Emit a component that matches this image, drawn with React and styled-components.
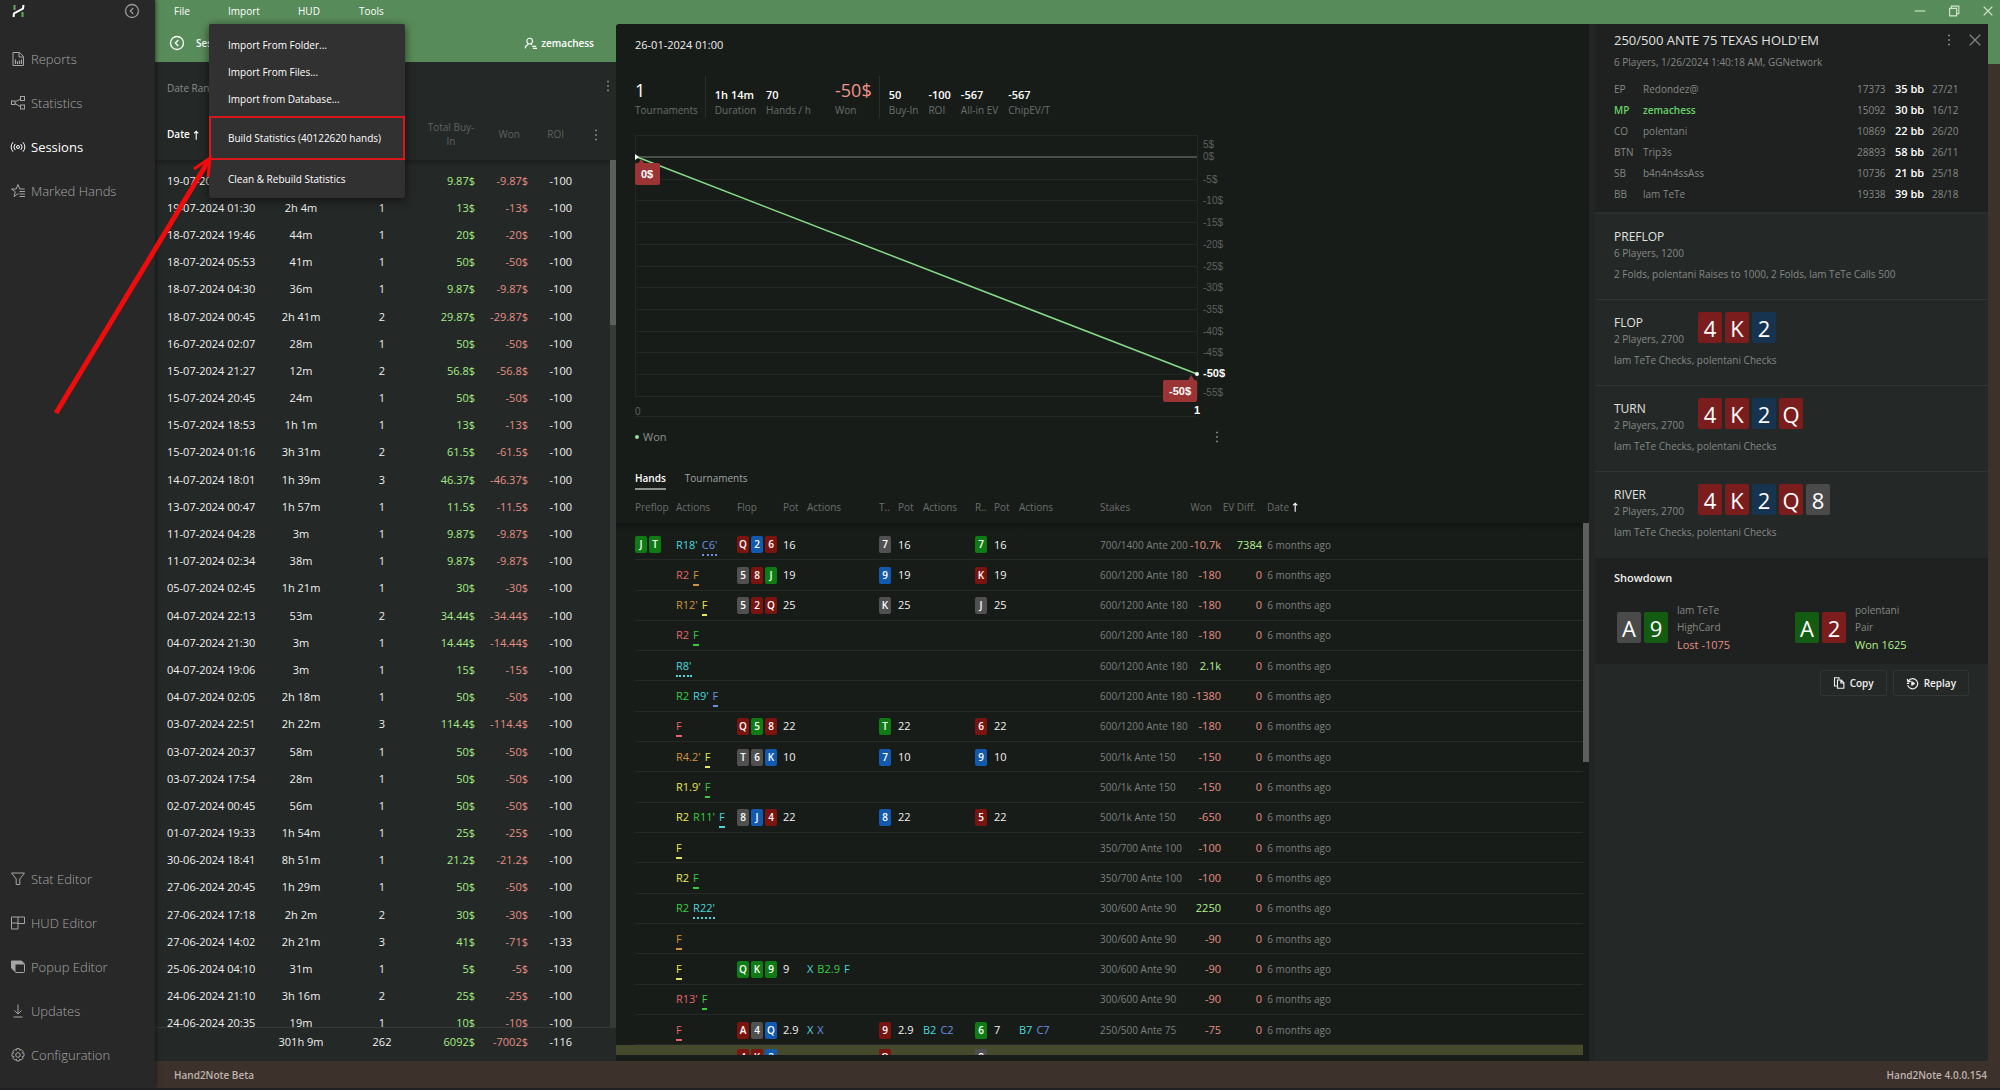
import styled, { createGlobalStyle, css } from 'styled-components'

const colors = {
    sidebar: '#282828',
    panel: '#242827',
    center: '#181c19',
    dark: '#1e211f',
    green: '#588b5a',
    brown: '#3d312b',
    text: '#f0f0f0',
    muted: '#7c807d',
    faint: '#5f6360',
    win: '#a6ee84',
    loss: '#e58f84',
}

const actionColors = {
    red: '#e0666c',
    orange: '#cf9440',
    yellow: '#e6e65a',
    green: '#38cc42',
    cyan: '#4ad8dc',
    blue: '#6a90e0',
}

const cardColors = {
    r: '#7b130f',
    g: '#0e7b13',
    b: '#1259b0',
    s: '#505050',
}

const bigCardColors = {
    r: '#7c1d1d',
    g: '#155c13',
    b: '#16344f',
    s: '#4a4a4a',
}

const sessions = [
    ['19-07-2024 02:10', '1h 2m', 1, '9.87$', '-9.87$', -100],
    ['19-07-2024 01:30', '2h 4m', 1, '13$', '-13$', -100],
    ['18-07-2024 19:46', '44m', 1, '20$', '-20$', -100],
    ['18-07-2024 05:53', '41m', 1, '50$', '-50$', -100],
    ['18-07-2024 04:30', '36m', 1, '9.87$', '-9.87$', -100],
    ['18-07-2024 00:45', '2h 41m', 2, '29.87$', '-29.87$', -100],
    ['16-07-2024 02:07', '28m', 1, '50$', '-50$', -100],
    ['15-07-2024 21:27', '12m', 2, '56.8$', '-56.8$', -100],
    ['15-07-2024 20:45', '24m', 1, '50$', '-50$', -100],
    ['15-07-2024 18:53', '1h 1m', 1, '13$', '-13$', -100],
    ['15-07-2024 01:16', '3h 31m', 2, '61.5$', '-61.5$', -100],
    ['14-07-2024 18:01', '1h 39m', 3, '46.37$', '-46.37$', -100],
    ['13-07-2024 00:47', '1h 57m', 1, '11.5$', '-11.5$', -100],
    ['11-07-2024 04:28', '3m', 1, '9.87$', '-9.87$', -100],
    ['11-07-2024 02:34', '38m', 1, '9.87$', '-9.87$', -100],
    ['05-07-2024 02:45', '1h 21m', 1, '30$', '-30$', -100],
    ['04-07-2024 22:13', '53m', 2, '34.44$', '-34.44$', -100],
    ['04-07-2024 21:30', '3m', 1, '14.44$', '-14.44$', -100],
    ['04-07-2024 19:06', '3m', 1, '15$', '-15$', -100],
    ['04-07-2024 02:05', '2h 18m', 1, '50$', '-50$', -100],
    ['03-07-2024 22:51', '2h 22m', 3, '114.4$', '-114.4$', -100],
    ['03-07-2024 20:37', '58m', 1, '50$', '-50$', -100],
    ['03-07-2024 17:54', '28m', 1, '50$', '-50$', -100],
    ['02-07-2024 00:45', '56m', 1, '50$', '-50$', -100],
    ['01-07-2024 19:33', '1h 54m', 1, '25$', '-25$', -100],
    ['30-06-2024 18:41', '8h 51m', 1, '21.2$', '-21.2$', -100],
    ['27-06-2024 20:45', '1h 29m', 1, '50$', '-50$', -100],
    ['27-06-2024 17:18', '2h 2m', 2, '30$', '-30$', -100],
    ['27-06-2024 14:02', '2h 21m', 3, '41$', '-71$', -133],
    ['25-06-2024 04:10', '31m', 1, '5$', '-5$', -100],
    ['24-06-2024 21:10', '3h 16m', 2, '25$', '-25$', -100],
    ['24-06-2024 20:35', '19m', 1, '10$', '-10$', -100],
]

// actions: [label, color, underline]
const hands = [
    {
        hole: 'Jg Tg',
        pre: [["R18'", 'cyan'], ["C6'", 'blue', 'dotted']],
        flop: 'Qr 2b 6r', turn: '7s', river: '7g', pots: [16, 16, 16],
        stakes: '700/1400 Ante 200', won: '-10.7k', ev: '7384',
    },
    {
        pre: [['R2', 'red'], ['F', 'orange', 'solid']],
        flop: '5s 8r Jg', turn: '9b', river: 'Kr', pots: [19, 19, 19],
        stakes: '600/1200 Ante 180', won: '-180',
    },
    {
        pre: [["R12'", 'orange'], ['F', 'yellow', 'solid']],
        flop: '5s 2r Qr', turn: 'Ks', river: 'Js', pots: [25, 25, 25],
        stakes: '600/1200 Ante 180', won: '-180',
    },
    {
        pre: [['R2', 'red'], ['F', 'green', 'solid']],
        stakes: '600/1200 Ante 180', won: '-180',
    },
    {
        pre: [["R8'", 'cyan', 'dotted']],
        stakes: '600/1200 Ante 180', won: '2.1k',
    },
    {
        pre: [['R2', 'green'], ["R9'", 'cyan'], ['F', 'blue', 'solid']],
        stakes: '600/1200 Ante 180', won: '-1380',
    },
    {
        pre: [['F', 'red', 'solid']],
        flop: 'Qr 5g 8r', turn: 'Tg', river: '6r', pots: [22, 22, 22],
        stakes: '600/1200 Ante 180', won: '-180',
    },
    {
        pre: [["R4.2'", 'orange'], ['F', 'yellow', 'solid']],
        flop: 'Ts 6s Kb', turn: '7b', river: '9b', pots: [10, 10, 10],
        stakes: '500/1k Ante 150', won: '-150',
    },
    {
        pre: [["R1.9'", 'yellow'], ['F', 'green', 'solid']],
        stakes: '500/1k Ante 150', won: '-150',
    },
    {
        pre: [['R2', 'yellow'], ["R11'", 'green'], ['F', 'cyan', 'solid']],
        flop: '8s Jb 4r', turn: '8b', river: '5r', pots: [22, 22, 22],
        stakes: '500/1k Ante 150', won: '-650',
    },
    { pre: [['F', 'yellow', 'solid']], stakes: '350/700 Ante 100', won: '-100' },
    {
        pre: [['R2', 'yellow'], ['F', 'green', 'solid']],
        stakes: '350/700 Ante 100', won: '-100',
    },
    {
        pre: [['R2', 'green'], ["R22'", 'cyan', 'dotted']],
        stakes: '300/600 Ante 90', won: '2250',
    },
    { pre: [['F', 'orange', 'solid']], stakes: '300/600 Ante 90', won: '-90' },
    {
        pre: [['F', 'yellow', 'solid']],
        flop: 'Qg Kg 9g', pots: [9],
        flopActions: [['X', 'cyan'], ['B2.9', 'green'], ['F', 'cyan']],
        stakes: '300/600 Ante 90', won: '-90',
    },
    {
        pre: [["R13'", 'red'], ['F', 'green', 'solid']],
        stakes: '300/600 Ante 90', won: '-90',
    },
    {
        pre: [['F', 'red', 'solid']],
        flop: 'Ar 4s Qb', turn: '9r', river: '6g', pots: ['2.9', '2.9', 7],
        flopActions: [['X', 'cyan'], ['X', 'blue']],
        turnActions: [['B2', 'cyan'], ['C2', 'blue']],
        riverActions: [['B7', 'cyan'], ['C7', 'blue']],
        stakes: '250/500 Ante 75', won: '-75',
    },
    { selected: true, flop: '4r Kr 2b', turn: 'Qr', river: '8s' },
]

const players = [
    ['EP', 'Redondez@', 17373, '35 bb', '27/21'],
    ['MP', 'zemachess', 15092, '30 bb', '16/12'],
    ['CO', 'polentani', 10869, '22 bb', '26/20'],
    ['BTN', 'Trip3s', 28893, '58 bb', '26/11'],
    ['SB', 'b4n4n4ssAss', 10736, '21 bb', '25/18'],
    ['BB', 'lam TeTe', 19338, '39 bb', '28/18'],
]

const streets = [
    {
        name: 'PREFLOP',
        info: '6 Players, 1200',
        text: '2 Folds, polentani Raises to 1000, 2 Folds, lam TeTe Calls 500',
    },
    { name: 'FLOP', cards: '4r Kr 2b' },
    { name: 'TURN', cards: '4r Kr 2b Qr' },
    { name: 'RIVER', cards: '4r Kr 2b Qr 8s' },
]

const GlobalStyle = createGlobalStyle`
    * {
        box-sizing: border-box;
    }
    body {
        margin: 0;
        background: #171717;
        color: ${colors.text};
        font: 11px/16px 'Open Sans', 'Noto Sans', sans-serif;
    }
    button {
        font: inherit;
        color: inherit;
        background: none;
        border: 0;
        padding: 0;
        cursor: pointer;
    }
    table {
        border-collapse: collapse;
        table-layout: fixed;
    }
    td, th {
        padding: 0;
        font-weight: inherit;
        white-space: nowrap;
    }
    h2, h3, p {
        margin: 0;
        font-weight: 400;
    }
`

const Shell = styled.div`
    display: flex;
    height: 100vh;
    overflow: hidden;
    position: relative;
    border-bottom: 2px solid #202022;
`

/* sidebar */
const Sidebar = styled.nav`
    display: flex;
    flex-direction: column;
    flex: 0 0 155px;
    background: ${colors.sidebar};
    padding-bottom: 11px;
    box-shadow: 1px 0 4px rgba(0, 0, 0, 0.5);
    z-index: 1;
`
const Brand = styled.div`
    display: flex;
    align-items: center;
    justify-content: space-between;
    height: 22px;
    padding: 0 15px 0 12px;
    margin-bottom: 15px;
    color: #9a9a9a;

    button,
    svg {
        display: block;
    }
`
const NavLink = styled.a`
    display: flex;
    align-items: center;
    gap: 5px;
    height: 44px;
    padding-left: 10px;
    font-size: 13px;
    font-weight: ${(props) => (props.$active ? 500 : 300)};
    color: ${(props) => (props.$active ? '#fff' : '#a6a6a6')};
    text-decoration: none;
`
const Spacer = styled.div`
    flex: 1;
`

/* window */
const Main = styled.div`
    flex: 1;
    min-width: 0;
    display: flex;
    flex-direction: column;
`
const MenuBar = styled.header`
    display: flex;
    align-items: center;
    height: 24px;
    padding: 0 5px 2px 19px;
    background: ${colors.green};
    color: #fff;
    font-size: 10px;
    font-weight: 500;
`
const MenuItem = styled.div`
    position: relative;
    width: ${(props) => props.$width}px;
`
const Dropdown = styled.div`
    position: absolute;
    top: 21px;
    left: -19px;
    width: 196px;
    padding: 7px 0 6px;
    background: #313131;
    border-radius: 2px;
    box-shadow: 0 2px 10px rgba(0, 0, 0, 0.6);
    z-index: 10;
`
const DropdownItem = styled.button`
    display: block;
    width: 100%;
    height: ${(props) => (props.$boxed ? 44 : 27)}px;
    margin: ${(props) => (props.$boxed ? '4px 0 5px' : 0)};
    padding-left: ${(props) => (props.$boxed ? 17 : 19)}px;
    border: ${(props) => (props.$boxed ? '2px solid #d8191b' : 0)};
    text-align: left;
    white-space: nowrap;
`
const WindowButtons = styled.div`
    display: flex;
    gap: 20px;
    margin-left: auto;
    color: #d3e6d2;

    svg {
        display: block;
    }
`
const Body = styled.div`
    flex: 1;
    min-height: 0;
    display: flex;
    padding-right: 12px;
    background: linear-gradient(${colors.green} 40px, ${colors.brown} 40px);
`
const StatusBar = styled.footer`
    display: flex;
    align-items: center;
    justify-content: space-between;
    height: 27px;
    padding: 0 13px 0 19px;
    background: ${colors.brown};
    color: #bdb4ae;
    font-size: 10px;
    font-weight: 600;
`

/* sessions list */
const SessionsPanel = styled.section`
    display: flex;
    flex-direction: column;
    flex: 0 0 461px;
    background: ${colors.panel};
`
const SessionsBar = styled.div`
    display: flex;
    align-items: center;
    gap: 11px;
    height: 38px;
    padding: 0 22px 0 14px;
    background: ${colors.green};
    color: #fff;
    font-size: 10px;
    font-weight: 600;

    svg {
        display: block;
    }
`
const Account = styled.button`
    display: flex;
    align-items: center;
    gap: 4px;
    margin-left: auto;
`
const FilterBar = styled.div`
    display: flex;
    align-items: center;
    justify-content: space-between;
    height: 46px;
    padding: 6px 2px 0 12px;
    color: #8a8d8a;
    font-size: 10px;
`
const Scroller = styled.div`
    flex: 1;
    min-height: 0;
    display: flex;
    overflow: hidden;
`
const ScrollTrack = styled.div`
    flex: 0 0 6px;
    margin-top: ${(props) => props.$top}px;
    background: ${(props) => props.$track};

    &::before {
        content: '';
        display: block;
        height: ${(props) => props.$thumb};
        background: #5d5f5e;
    }
`
const SessionTable = styled.table`
    width: 455px;
    height: ${(props) => (props.$stretch ? 'calc(100% + 10px)' : '28px')};
    font-size: 11px;
    font-weight: 500;

    thead th {
        height: 52px;
        color: ${colors.faint};
        font-size: 10px;
        font-weight: 400;
        line-height: 14px;
    }
`
const Shade = styled.tr`
    height: 7px;
    background: linear-gradient(#1c1f1e, ${colors.panel});
`
const Cell = styled.td`
    text-align: ${(props) => props.$align || 'left'};
    color: ${(props) => props.$color || 'inherit'};
    font-size: ${(props) => (props.$small ? 10 : 11)}px;
    font-weight: ${(props) => (props.$small ? 400 : 'inherit')};
`
const Th = styled.th`
    && {
        padding: 0 ${(props) => props.$right || 0}px 0 ${(props) => props.$left || 0}px;
        text-align: ${(props) => props.$align || 'left'};
        color: ${(props) => props.$color};
        font-weight: ${(props) => (props.$color ? 600 : 400)};
        white-space: ${(props) => (props.$wrap ? 'normal' : 'nowrap')};
    }
    svg {
        vertical-align: middle;
    }
`
const TotalBar = styled.div`
    flex: 0 0 34px;
    border-top: 1px solid #353938;
`

/* center */
const DetailPanel = styled.section`
    flex: 1;
    min-width: 0;
    display: flex;
    flex-direction: column;
    background: ${colors.center};
    border-radius: 3px 0 0 0;
    padding-bottom: 6px;
`
const DetailTitle = styled.h2`
    padding: 13px 19px 0;
    font-size: 11px;
    line-height: 16px;
    font-weight: 500;
`
const StatRow = styled.div`
    display: flex;
    align-items: flex-end;
    height: 65px;
    padding-left: 19px;
`
const StatGroup = styled.div`
    display: flex;
    align-items: flex-end;
    gap: 10px;
    height: 42px;
    padding: 0 7px 0 ${(props) => (props.$first ? 0 : 9)}px;
    border-right: ${(props) => (props.$last ? 0 : '1px solid #2b2f2c')};
`
const Stat = styled.div`
    margin-left: ${(props) => (props.$apart ? 14 : 0)}px;
    color: #6a6e6b;
    font-size: 10px;
    line-height: 16px;
    white-space: nowrap;

    strong {
        display: block;
        font-size: ${(props) => (props.$big ? 18 : 11)}px;
        font-weight: ${(props) => (props.$big ? 400 : 600)};
        line-height: ${(props) => (props.$big ? 24 : 14)}px;
        color: ${(props) => props.$color || '#fff'};
    }
`
const ChartBox = styled.div`
    padding: 17px 19px 0;

    svg {
        display: block;
        font-family: 'Liberation Sans', Arial, sans-serif;
    }
`
const Legend = styled.div`
    display: flex;
    align-items: center;
    width: 607px;
    height: 20px;
    margin-top: 6px;
    padding: 0 0 0 19px;
    color: #8e918f;

    &::before {
        content: '';
        width: 4px;
        height: 4px;
        margin-right: 4px;
        border-radius: 50%;
        background: #8fe08f;
    }
    button {
        margin-left: auto;
    }
    svg {
        display: block;
    }
`
const Tabs = styled.div`
    display: flex;
    gap: 19px;
    padding: 23px 19px 0;
`
const Tab = styled.button`
    height: 20px;
    padding-bottom: 2px;
    border-bottom: 2px solid ${(props) => (props.$active ? '#8e918f' : 'transparent')};
    font-size: 10px;
    font-weight: ${(props) => (props.$active ? 600 : 400)};
    color: ${(props) => (props.$active ? '#fff' : '#a0a3a1')};
`
const HandTable = styled.table`
    width: 100%;
    height: calc(100% + 15px);
    font-weight: 500;

    th {
        height: 33px;
        color: #6a6e6b;
        font-size: 10px;
        font-weight: 400;
        text-align: left;
    }
    tbody td {
        border-bottom: 1px solid #262a27;
    }
    tbody td:first-child {
        border-bottom: 0;
    }
`
const HandShade = styled.tr`
    height: 7px;
    background: linear-gradient(#101311, ${colors.center});

    && td {
        border: 0;
    }
`
const HandRow = styled.tr`
    background: ${(props) => (props.$selected ? '#454a2c' : 'none')};
`
const Cards = styled.span`
    display: inline-flex;
    gap: 2px;
    vertical-align: middle;
`
const Card = styled.span`
    width: 12px;
    height: 17px;
    border-radius: 2px;
    background: ${(props) => cardColors[props.$suit]};
    color: #fff;
    font-size: 10px;
    font-weight: 600;
    line-height: 17px;
    text-align: center;
`
const Actions = styled.span`
    display: inline-flex;
    gap: 4px;
    vertical-align: middle;
`
const Action = styled.span`
    display: inline-block;
    height: 19px;
    margin-top: 3px;
    line-height: 16px;
    color: ${(props) => actionColors[props.$color]};
    ${(props) =>
        props.$line &&
        css`
            border-bottom: 2px ${props.$line} ${actionColors[props.$color]};
        `}
`

/* hand history */
const HandPanel = styled.aside`
    display: flex;
    flex-direction: column;
    flex: 0 0 399px;
    background: ${colors.panel};
    border-left: 6px solid #222524;
    border-radius: 0 3px 0 0;
    font-size: 10px;
    color: #858886;
`
const HandHeader = styled.div`
    height: 190px;
    padding: 5px 0 0 19px;
    background: ${colors.dark};
    border-bottom: 2px solid #2b2f2e;
`
const TitleRow = styled.div`
    display: flex;
    align-items: center;
    gap: 13px;
    padding-right: 6px;

    h2 {
        flex: 1;
        font-size: 13px;
        line-height: 22px;
        font-weight: 400;
        color: #e0e2e0;
    }
    svg {
        display: block;
    }
`
const HandInfo = styled.p`
    padding-top: 3px;
`
const PlayerTable = styled.table`
    width: 100%;
    margin-top: 8px;

    td {
        height: 21px;
    }
    td:nth-child(4) {
        color: #fff;
        font-size: 11px;
        font-weight: 600;
    }
`
const PlayerRow = styled.tr`
    td:nth-child(-n + 2) {
        ${(props) => props.$hero && 'color: #66d467; font-weight: 600;'}
    }
`
const Street = styled.section`
    height: 86px;
    padding: 12px 0 0 19px;
    border-bottom: 1px solid ${(props) => (props.$last ? 'transparent' : '#313534')};
`
const StreetHead = styled.div`
    display: flex;
    height: 36px;

    h3 {
        font-size: 12px;
        line-height: 17px;
        color: #e0e2e0;
    }
    p {
        line-height: 16px;
    }
`
const StreetName = styled.div`
    flex: 0 0 84px;
    padding-top: 2px;
    white-space: nowrap;
`
const StreetText = styled.p`
    margin-top: 4px;
    line-height: 16px;
`
const BigCards = styled.div`
    display: flex;
    gap: 3px;
`
const BigCard = styled.span`
    width: 24px;
    height: 31px;
    border-radius: 2px;
    background: ${(props) => bigCardColors[props.$suit]};
    color: #fff;
    font-size: 22px;
    line-height: 33px;
    text-align: center;
`
const Showdown = styled.section`
    height: 106px;
    padding: 12px 0 0 19px;
    background: ${colors.dark};

    h3 {
        font-size: 11px;
        line-height: 16px;
        font-weight: 600;
        color: #f0f0f0;
    }
`
const Results = styled.div`
    display: grid;
    grid-template-columns: 178px 1fr;
    margin-top: 16px;
    padding-left: 3px;
`
const Result = styled.div`
    display: flex;
    align-items: center;
    gap: 9px;
    line-height: 17px;

    strong {
        display: block;
        font-size: 11px;
        font-weight: 500;
        color: ${(props) => (props.$won ? '#b3f08f' : colors.loss)};
    }
`
const ButtonRow = styled.div`
    display: flex;
    justify-content: flex-end;
    gap: 6px;
    padding: 6px 19px 0 0;
`
const OutlineButton = styled.button`
    display: flex;
    align-items: center;
    justify-content: center;
    gap: 5px;
    height: 26px;
    padding: 0 12px;
    border: 1px solid #313534;
    border-radius: 2px;
    color: #f0f0f0;
    font-size: 10px;
    font-weight: 600;
`

const Arrow = styled.svg`
    position: absolute;
    left: 0;
    top: 0;
    pointer-events: none;
    z-index: 20;
`

const Svg = ({ size = 16, children, ...rest }) => (
    <svg
        width={size}
        height={size}
        viewBox="0 0 16 16"
        fill="none"
        stroke="currentColor"
        aria-hidden="true"
        {...rest}
    >
        {children}
    </svg>
)

const BackIcon = () => (
    <Svg>
        <circle cx="8" cy="8" r="6.5" strokeWidth="1.3" />
        <path d="M9.3 5L6.3 8l3 3" strokeWidth="1.3" />
    </Svg>
)

const DotsIcon = () => (
    <Svg size={12} fill="#a4a7a5" stroke="none">
        <rect x="7" y="1" width="2" height="2" />
        <rect x="7" y="7" width="2" height="2" />
        <rect x="7" y="13" width="2" height="2" />
    </Svg>
)

const SortIcon = () => (
    <Svg size={11} stroke="#fff">
        <path d="M9 14V2M6 5l3-3 3 3" strokeWidth="1.6" />
    </Svg>
)

const icons = {
    Reports: (
        <>
            <path d="M3 1.5h6.5l4 4v9H3z" />
            <path d="M9 1.5V6h4.5" />
            <path d="M5.5 13V8.5M7.5 13v-2.5M9.5 13V9.5M11.5 13V8.5" strokeWidth="1.2" />
        </>
    ),
    Statistics: (
        <>
            <rect x="1.5" y="6" width="3.5" height="3.5" />
            <rect x="10.5" y="1.5" width="4" height="4" />
            <rect x="10.5" y="10" width="4" height="4" />
            <path d="M5 7l5.5-3M5 8.5l5.5 3.2" />
        </>
    ),
    Sessions: (
        <>
            <circle cx="8" cy="8" r="1.5" />
            <path d="M5.2 5a4.5 4.5 0 0 0 0 6M10.8 5a4.5 4.5 0 0 1 0 6M3 3.3a7.5 7.5 0 0 0 0 9.4M13 3.3a7.5 7.5 0 0 1 0 9.4" />
        </>
    ),
    'Marked Hands': (
        <path d="M8.5 10.5L4 13.5l1.3-4.7L1.5 6h4.7L8 1.5 9.7 6h5M9.5 8.5h5.5M9.5 11h5.5M9.5 13.5h5.5" />
    ),
    'Stat Editor': <path d="M1.5 2h13l-4.7 6v5.5H6.2V8z" />,
    'HUD Editor': <path d="M1.5 2h13v6.5H8V14H1.5zM8 2v6.5M1.5 8H8" />,
    'Popup Editor': (
        <>
            <path d="M4.5 12L1.5 9V2h10l3 3" fill="currentColor" />
            <rect x="5" y="5" width="9.5" height="8.5" rx="1" fill={colors.sidebar} />
        </>
    ),
    Updates: <path d="M8 1.5v9M4.5 7.5L8 11l3.5-3.5M3.5 14h9" />,
    Configuration: (
        <>
            <circle cx="8" cy="8" r="2.3" />
            <path d="M6.8 1.5h2.4l.4 1.8 1.6-.9 1.9 1.9-1 1.5 1.9.5v2.9l-1.9.5 1 1.5-1.9 1.9-1.6-.9-.4 1.8H6.8l-.4-1.8-1.6.9-1.9-1.9 1-1.5L2 9.2V6.3l1.9-.5-1-1.5 1.9-1.9 1.6.9z" />
        </>
    ),
}

const NavItem = ({ name, active }) => (
    <NavLink href={`#${name}`} $active={active}>
        <Svg>{icons[name]}</Svg>
        {name}
    </NavLink>
)

const parseCards = (str) => str.split(' ').map((c) => [c[0], c[1]])

const CardList = ({ cards }) =>
    cards ? (
        <Cards>
            {parseCards(cards).map(([rank, suit]) => (
                <Card key={rank + suit} $suit={suit}>
                    {rank}
                </Card>
            ))}
        </Cards>
    ) : null

const BigCardList = ({ cards }) => (
    <BigCards>
        {parseCards(cards).map(([rank, suit]) => (
            <BigCard key={rank + suit} $suit={suit}>
                {rank}
            </BigCard>
        ))}
    </BigCards>
)

const ActionList = ({ actions = [] }) => (
    <Actions>
        {actions.map(([label, color, line], i) => (
            <Action key={i} $color={color} $line={line}>
                {label}
            </Action>
        ))}
    </Actions>
)

const Cols = ({ widths }) => (
    <colgroup>
        {widths.map((width, i) => (
            <col key={i} width={width} />
        ))}
        <col />
    </colgroup>
)

const sessionCols = [12, 90, 88, 74, 56, 53, 44]
const handCols = [19, 41, 61, 46, 24, 72, 19, 25, 52, 19, 25, 81, 87, 34, 41]

const SessionCells = ({ row }) => (
    <tr>
        <td />
        <Cell>{row[0]}</Cell>
        <Cell $align="center">{row[1]}</Cell>
        <Cell $align="center">{row[2]}</Cell>
        <Cell $align="right" $color={colors.win}>{row[3]}</Cell>
        <Cell $align="right" $color={colors.loss}>{row[4]}</Cell>
        <Cell $align="right">{row[5]}</Cell>
        <td />
    </tr>
)

function Sessions() {
    return (
        <SessionsPanel>
            <SessionsBar>
                <button aria-label="Back">
                    <BackIcon />
                </button>
                <span>Sessions</span>
                <Account>
                    <Svg size={13}>
                        <circle cx="7" cy="5" r="3.5" strokeWidth="1.3" />
                        <path d="M1.5 14c.3-3 2-4.5 4-5.5M8.5 8.5l1.5 1" strokeWidth="1.3" />
                        <path d="M10 11.5h5M11 14h5" strokeWidth="1.6" />
                    </Svg>
                    zemachess
                </Account>
            </SessionsBar>
            <FilterBar>
                <span>Date Range</span>
                <button aria-label="Filter options">
                    <DotsIcon />
                </button>
            </FilterBar>
            <Scroller>
                <SessionTable $stretch>
                    <Cols widths={sessionCols} />
                    <thead>
                        <tr>
                            <th />
                            <Th $color="#fff">
                                Date
                                <SortIcon />
                            </Th>
                            <Th $align="center">Duration</Th>
                            <Th $align="center">Count</Th>
                            <Th $align="center" $left={8} $wrap>Total Buy-In</Th>
                            <Th $align="right" $right={8}>Won</Th>
                            <Th $align="right" $right={8}>ROI</Th>
                            <Th $align="right" $right={8}>
                                <button aria-label="Columns">
                                    <DotsIcon />
                                </button>
                            </Th>
                        </tr>
                    </thead>
                    <tbody>
                        <Shade>
                            <td colSpan="8" />
                        </Shade>
                        {sessions.map((row) => (
                            <SessionCells key={row[0]} row={row} />
                        ))}
                    </tbody>
                </SessionTable>
                <ScrollTrack $top={52} $thumb="19%" $track="#363a39" />
            </Scroller>
            <TotalBar>
                <SessionTable>
                    <Cols widths={sessionCols} />
                    <tbody>
                        <SessionCells row={['', '301h 9m', 262, '6092$', '-7002$', -116]} />
                    </tbody>
                </SessionTable>
            </TotalBar>
        </SessionsPanel>
    )
}

function Chart() {
    const step = 21.7
    const zero = 22
    const end = zero + step * 10
    return (
        <ChartBox>
            <svg width="604" height="286" viewBox="0 0 604 286" fontSize="10">
                <g stroke="#242825">
                    {Array.from({ length: 11 }, (_, i) => (
                        <path key={i} d={`M0 ${Math.round(zero + step * (i + 1)) + 0.5}H562`} />
                    ))}
                    <path d="M0 .5H562M562.5 0V262M0 281.5H562M.5 0V262" />
                </g>
                <path d={`M0 ${zero}H562`} stroke="#4a4e4b" strokeWidth="2" />
                <path d={`M2 ${zero}L562 ${end}`} stroke="#86dc8a" strokeWidth="1.5" />
                <path d={`M0 ${zero - 3}L4 ${zero}L0 ${zero + 3}z`} fill="#fff" />
                <circle cx="562" cy={end} r="2" fill="#fff" />
                <g fill="#9c3436">
                    <path d="M3 29L6 24l4 5z" />
                    <rect x="0" y="28" width="25" height="22" rx="2" />
                    <path d="M553 246l3-6 4 6z" />
                    <rect x="528" y="245" width="34" height="22" rx="2" />
                </g>
                <g fill="#fff" fontWeight="700" fontSize="11">
                    <text x="12" y="43" textAnchor="middle">0$</text>
                    <text x="545" y="260" textAnchor="middle">-50$</text>
                    <text x="568" y={end + 3}>-50$</text>
                    <text x="562" y="279" textAnchor="middle">1</text>
                </g>
                <g fill="#5c615e">
                    <text x="568" y="13">5$</text>
                    <text x="568" y="25">0$</text>
                    {[5, 10, 15, 20, 25, 30, 35, 40, 45].map((v, i) => (
                        <text key={v} x="568" y={Math.round(zero + step * (i + 1)) + 4}>
                            -{v}$
                        </text>
                    ))}
                    <text x="568" y="261">-55$</text>
                    <text x="0" y="280">0</text>
                </g>
            </svg>
        </ChartBox>
    )
}

function Hands() {
    const headers = [
        '', 'Preflop', 'Actions', 'Flop', 'Pot', 'Actions', 'T..', 'Pot',
        'Actions', 'R..', 'Pot', 'Actions', 'Stakes',
    ]
    return (
        <Scroller>
            <HandTable>
                <Cols widths={handCols} />
                <thead>
                    <tr>
                        {headers.map((header, i) => (
                            <th key={i}>{header}</th>
                        ))}
                        <Th $right={9} $align="right">Won</Th>
                        <Th $right={6} $align="right">EV Diff.</Th>
                        <Th $left={5}>
                            Date
                            <SortIcon />
                        </Th>
                    </tr>
                </thead>
                <tbody>
                    <HandShade>
                        <td colSpan="16" />
                    </HandShade>
                    {hands.map((hand, i) => {
                        const [flopPot, turnPot, riverPot] = hand.pots || []
                        return (
                            <HandRow key={i} $selected={hand.selected}>
                                <td />
                                <td><CardList cards={hand.hole} /></td>
                                <td><ActionList actions={hand.pre} /></td>
                                <td><CardList cards={hand.flop} /></td>
                                <td>{flopPot}</td>
                                <td><ActionList actions={hand.flopActions} /></td>
                                <td><CardList cards={hand.turn} /></td>
                                <td>{turnPot}</td>
                                <td><ActionList actions={hand.turnActions} /></td>
                                <td><CardList cards={hand.river} /></td>
                                <td>{riverPot}</td>
                                <td><ActionList actions={hand.riverActions} /></td>
                                <Cell $small $color={colors.muted}>{hand.stakes}</Cell>
                                <Cell
                                    $align="right"
                                    $color={hand.won?.startsWith('-') ? colors.loss : '#b3f08f'}
                                >
                                    {hand.won}
                                </Cell>
                                <Cell $align="right" $color={hand.ev ? '#b3f08f' : colors.loss}>
                                    {hand.stakes && (hand.ev || '0')}
                                </Cell>
                                <Cell $small $color={colors.muted}>
                                    {hand.stakes && <>&nbsp;&nbsp;6 months ago</>}
                                </Cell>
                            </HandRow>
                        )
                    })}
                </tbody>
            </HandTable>
            <ScrollTrack $top={33} $thumb="45%" $track="transparent" />
        </Scroller>
    )
}

function Detail() {
    return (
        <DetailPanel>
            <DetailTitle>26-01-2024 01:00</DetailTitle>
            <StatRow>
                <StatGroup $first>
                    <Stat $big><strong>1</strong>Tournaments</Stat>
                </StatGroup>
                <StatGroup>
                    <Stat><strong>1h 14m</strong>Duration</Stat>
                    <Stat><strong>70</strong>Hands / h</Stat>
                    <Stat $big $apart $color="#ef9288"><strong>-50$</strong>Won</Stat>
                </StatGroup>
                <StatGroup $last>
                    <Stat><strong>50</strong>Buy-In</Stat>
                    <Stat><strong>-100</strong>ROI</Stat>
                    <Stat><strong>-567</strong>All-in EV</Stat>
                    <Stat><strong>-567</strong>ChipEV/T</Stat>
                </StatGroup>
            </StatRow>
            <Chart />
            <Legend>
                Won
                <button aria-label="Chart options">
                    <DotsIcon />
                </button>
            </Legend>
            <Tabs>
                <Tab $active>Hands</Tab>
                <Tab>Tournaments</Tab>
            </Tabs>
            <Hands />
        </DetailPanel>
    )
}

function HandHistory() {
    return (
        <HandPanel>
            <HandHeader>
                <TitleRow>
                    <h2>250/500 ANTE 75 TEXAS HOLD'EM</h2>
                    <button aria-label="Hand options">
                        <DotsIcon />
                    </button>
                    <button aria-label="Close hand">
                        <Svg size={14}>
                            <path d="M2 2l12 12M14 2L2 14" strokeWidth="1.3" />
                        </Svg>
                    </button>
                </TitleRow>
                <HandInfo>6 Players, 1/26/2024 1:40:18 AM, GGNetwork</HandInfo>
                <PlayerTable>
                    <Cols widths={[29, 214, 38, 37]} />
                    <tbody>
                        {players.map((player) => (
                            <PlayerRow key={player[0]} $hero={player[0] === 'MP'}>
                                {player.map((value) => (
                                    <td key={value}>{value}</td>
                                ))}
                            </PlayerRow>
                        ))}
                    </tbody>
                </PlayerTable>
            </HandHeader>
            {streets.map((street) => (
                <Street key={street.name} $last={street.name === 'RIVER'}>
                    <StreetHead>
                        <StreetName>
                            <h3>{street.name}</h3>
                            <p>{street.info || '2 Players, 2700'}</p>
                        </StreetName>
                        {street.cards && <BigCardList cards={street.cards} />}
                    </StreetHead>
                    <StreetText>
                        {street.text || 'lam TeTe Checks, polentani Checks'}
                    </StreetText>
                </Street>
            ))}
            <Showdown>
                <h3>Showdown</h3>
                <Results>
                    <Result>
                        <BigCardList cards="As 9g" />
                        <div>
                            lam TeTe
                            <br />
                            HighCard
                            <strong>Lost -1075</strong>
                        </div>
                    </Result>
                    <Result $won>
                        <BigCardList cards="Ag 2r" />
                        <div>
                            polentani
                            <br />
                            Pair
                            <strong>Won 1625</strong>
                        </div>
                    </Result>
                </Results>
            </Showdown>
            <ButtonRow>
                <OutlineButton>
                    <Svg size={12}>
                        <path d="M5 12H2V1h6v2M6 4h5l3.5 3.5V15H6zM10.5 4v4h4" strokeWidth="1.5" />
                    </Svg>
                    Copy
                </OutlineButton>
                <OutlineButton>
                    <Svg size={13}>
                        <path d="M3 4.5A6.3 6.3 0 1 1 2 10M1.5 2.5l1 3.5L6 5M1 8h3" strokeWidth="1.5" />
                        <path d="M7 5.5L11 8l-4 2.5z" fill="currentColor" />
                    </Svg>
                    Replay
                </OutlineButton>
            </ButtonRow>
        </HandPanel>
    )
}

function App() {
    return (
        <Shell>
            <GlobalStyle />
            <Sidebar>
                <Brand>
                    <svg width="13" height="14" viewBox="0 0 13 14" fill="none" strokeWidth="2">
                        <path d="M2.5 1v5M10.5 8v5" stroke="#5fae5a" />
                        <path d="M1.5 13l.5-3.5 9-5L11.5 1" stroke="#fff" />
                    </svg>
                    <button aria-label="Collapse menu">
                        <BackIcon />
                    </button>
                </Brand>
                <NavItem name="Reports" />
                <NavItem name="Statistics" />
                <NavItem name="Sessions" active />
                <NavItem name="Marked Hands" />
                <Spacer />
                <NavItem name="Stat Editor" />
                <NavItem name="HUD Editor" />
                <NavItem name="Popup Editor" />
                <NavItem name="Updates" />
                <NavItem name="Configuration" />
            </Sidebar>
            <Main>
                <MenuBar>
                    <MenuItem $width={54}>
                        <button>File</button>
                    </MenuItem>
                    <MenuItem $width={70}>
                        <button>Import</button>
                        <Dropdown>
                            <DropdownItem>Import From Folder...</DropdownItem>
                            <DropdownItem>Import From Files...</DropdownItem>
                            <DropdownItem>Import from Database...</DropdownItem>
                            <DropdownItem $boxed>Build Statistics (40122620 hands)</DropdownItem>
                            <DropdownItem>Clean &amp; Rebuild Statistics</DropdownItem>
                        </Dropdown>
                    </MenuItem>
                    <MenuItem $width={61}>
                        <button>HUD</button>
                    </MenuItem>
                    <MenuItem $width={61}>
                        <button>Tools</button>
                    </MenuItem>
                    <WindowButtons>
                        <button aria-label="Minimize">
                            <Svg size={14}>
                                <path d="M2 8h12" strokeWidth="1.3" />
                            </Svg>
                        </button>
                        <button aria-label="Restore">
                            <Svg size={14}>
                                <path d="M3 5h8v8.5H3zM5 5V2.5h8.5V11H11" strokeWidth="1.3" />
                            </Svg>
                        </button>
                        <button aria-label="Close">
                            <Svg size={14}>
                                <path d="M3 3l10 10M13 3L3 13" strokeWidth="1.5" />
                            </Svg>
                        </button>
                    </WindowButtons>
                </MenuBar>
                <Body>
                    <Sessions />
                    <Detail />
                    <HandHistory />
                </Body>
                <StatusBar>
                    <span>Hand2Note Beta</span>
                    <span>Hand2Note 4.0.0.154</span>
                </StatusBar>
            </Main>
            <Arrow width="220" height="420" fill="none" stroke="#f00c0c" strokeWidth="5">
                <path d="M56 413L209 160" />
                <path d="M194 169L210 158L208 177" strokeWidth="3" />
            </Arrow>
        </Shell>
    )
}

export default App
